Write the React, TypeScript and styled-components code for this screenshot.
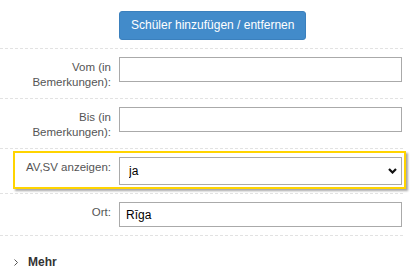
import React from "react";
import styled, { createGlobalStyle } from "styled-components";

const Global = createGlobalStyle`
  html, body { margin: 0; padding: 0; background: #fff; }
  body { font-family: "Liberation Sans", Arial, sans-serif; }
`;

const Form = styled.div`
  width: 403px;
  display: flex;
  flex-direction: column;
`;

const Row = styled.div<{ $first?: boolean; $highlight?: boolean }>`
  position: relative;
  display: grid;
  grid-template-columns: 111px 283px;
  column-gap: 8px;
  align-items: start;
  padding: ${(p) => (p.$first ? "11px 0 8px" : "8px 0")};
  border-top: ${(p) => (p.$first ? "none" : "1px dashed #e2e2e2")};
  ${(p) =>
    p.$highlight &&
    `
    &::after {
      content: "";
      position: absolute;
      left: 13px;
      right: -3px;
      top: 2px;
      bottom: 4px;
      border: 2px solid #ffd400;
      box-shadow: 2px 2px 2px rgba(0,0,0,0.35);
      pointer-events: none;
    }
  `}
`;

const Label = styled.label`
  text-align: right;
  font-size: 11.5px;
  line-height: 15px;
  padding-top: 3px;
  color: #555;
`;

const PrimaryButton = styled.button`
  justify-self: start;
  font-family: "Liberation Sans", Arial, sans-serif;
  font-size: 12px;
  line-height: 17px;
  padding: 5px 11px;
  color: #fff;
  background: #428bca;
  border: 1px solid #3b80bd;
  border-radius: 3px;
  cursor: pointer;
`;

const TextInput = styled.input`
  box-sizing: border-box;
  width: 100%;
  height: 25px;
  margin: 0;
  padding: 0 6px;
  border: 1px solid #aaa;
  font-family: "Liberation Sans", Arial, sans-serif;
  font-size: 12px;
  color: #000;
  background: #fff;
  outline: none;
`;

const SelectWrap = styled.div`
  position: relative;
  width: 100%;
`;

const Select = styled.select`
  box-sizing: border-box;
  width: 100%;
  height: 28px;
  margin: 0;
  padding: 0 20px 0 9px;
  border: 1px solid #aaa;
  border-radius: 0;
  appearance: none;
  -webkit-appearance: none;
  background: #fff;
  font-family: "Liberation Sans", Arial, sans-serif;
  font-size: 12px;
  color: #000;
  outline: none;
`;

const Chevron = styled.svg`
  position: absolute;
  right: 5px;
  top: 11px;
  pointer-events: none;
`;

const More = styled.div`
  display: flex;
  align-items: center;
  gap: 10px;
  padding: 19px 0 0 14px;
  border-top: 1px dashed #e2e2e2;
  font-size: 12px;
  line-height: 15px;
  font-weight: bold;
  color: #333;
`;

export default function App() {
  return (
    <>
      <Global />
      <Form>
        <Row $first>
          <span />
          <PrimaryButton>Schüler hinzufügen / entfernen</PrimaryButton>
        </Row>
        <Row>
          <Label>Vom (in Bemerkungen):</Label>
          <TextInput defaultValue="" />
        </Row>
        <Row>
          <Label>Bis (in Bemerkungen):</Label>
          <TextInput defaultValue="" />
        </Row>
        <Row $highlight>
          <Label>AV,SV anzeigen:</Label>
          <SelectWrap>
            <Select defaultValue="ja">
              <option value="ja">ja</option>
              <option value="nein">nein</option>
            </Select>
            <Chevron width="9" height="6" viewBox="0 0 9 6">
              <path d="M1 1 L4.5 4.5 L8 1" fill="none" stroke="#111" strokeWidth="2.2" />
            </Chevron>
          </SelectWrap>
        </Row>
        <Row>
          <Label>Ort:</Label>
          <TextInput defaultValue="Rīga" />
        </Row>
        <More>
          <svg width="4" height="7" viewBox="0 0 4 7">
            <path d="M0.5 0.5 L3.5 3.5 L0.5 6.5" fill="none" stroke="#555" strokeWidth="1" />
          </svg>
          <span>Mehr</span>
        </More>
      </Form>
    </>
  );
}
